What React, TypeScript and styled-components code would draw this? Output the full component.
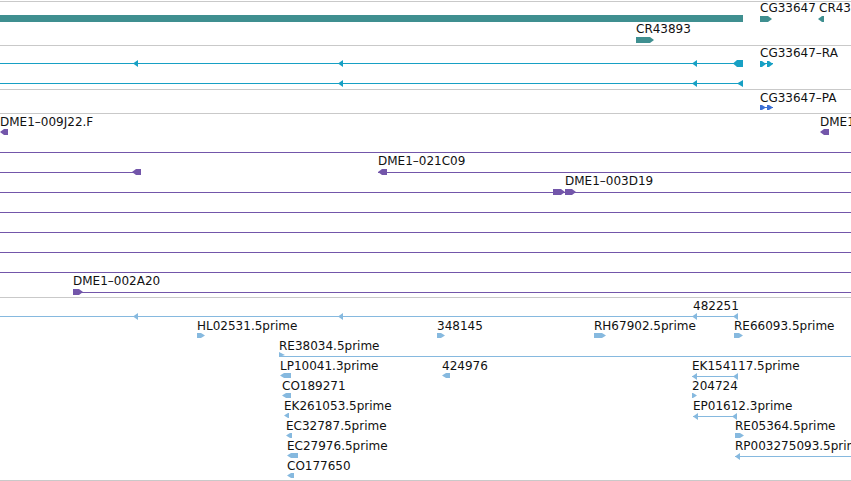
import React from 'react'
import styled, { createGlobalStyle } from 'styled-components'

const GlobalStyle = createGlobalStyle`
  html, body {
    margin: 0;
    padding: 0;
    background: #ffffff;
    overflow: hidden;
  }
  body {
    font-family: "DejaVu Sans", "Liberation Sans", sans-serif;
  }
`

const Browser = styled.div`
  width: 851px;
  height: 481px;
  padding-top: 1px;
  box-sizing: border-box;
  display: flex;
  flex-direction: column;
  overflow: hidden;
`

const TrackBox = styled.div<{ $h: number }>`
  position: relative;
  flex: none;
  height: ${p => p.$h}px;
  border-bottom: 1px solid #c9c9c9;
  overflow: hidden;
  &:first-child {
    border-top: 1px solid #c9c9c9;
  }
`

const Glyphs = styled.svg`
  position: absolute;
  left: 0;
  top: 0;
  display: block;
`

const Label = styled.span`
  position: absolute;
  font-family: "DejaVu Sans", "Liberation Sans", sans-serif;
  font-size: 12px;
  line-height: 14px;
  color: #111;
  white-space: nowrap;
`

// path helpers, page coordinates
const box = (x1: number, x2: number, y1: number, y2: number) =>
  `M${x1} ${y1}H${x2}V${y2}H${x1}Z`
const line = (x1: number, x2: number, y: number) => box(x1, x2, y, y + 1)
const pentR = (x1: number, x2: number, y1: number, y2: number) => {
  const t = Math.min(4, x2 - x1 - 1)
  const m = (y1 + y2) / 2
  return `M${x1} ${y1}H${x2 - t}L${x2} ${m}L${x2 - t} ${y2}H${x1}Z`
}
const pentL = (x1: number, x2: number, y1: number, y2: number) => {
  const t = Math.min(4, x2 - x1 - 1)
  const m = (y1 + y2) / 2
  return `M${x2} ${y1}H${x1 + t}L${x1} ${m}L${x1 + t} ${y2}H${x2}Z`
}
const headL = (x: number, row: number) => {
  const m = row + 0.5
  return `M${x} ${m}L${x + 5} ${m - 3.5}V${m + 3.5}Z`
}

type Tag = { text: string; x: number; cap: number }
type Track = { top: number; h: number; color: string; shapes: string[]; tags: Tag[] }

const tracks: Track[] = [
  {
    top: 2,
    h: 43,
    color: '#3f8f90',
    shapes: [
      box(0, 743, 15, 22),
      pentR(760, 772, 16, 22),
      pentL(818, 824, 16, 22),
      pentR(636, 654, 37, 43),
    ],
    tags: [
      { text: 'CG33647', x: 760, cap: 4 },
      { text: 'CR43893', x: 819, cap: 4 },
      { text: 'CR43893', x: 636, cap: 25 },
    ],
  },
  {
    top: 46,
    h: 43,
    color: '#17a0c4',
    shapes: [
      line(0, 740, 63),
      headL(133, 63),
      headL(338, 63),
      headL(692, 63),
      pentL(733, 743, 60, 67),
      line(0, 740, 83),
      headL(338, 83),
      headL(692, 83),
      `M737 83.5L743 80V87Z`,
      line(760, 773, 63),
      pentR(760, 766, 61, 67),
      pentR(767, 773, 61, 67),
    ],
    tags: [{ text: 'CG33647–RA', x: 760, cap: 49 }],
  },
  {
    top: 90,
    h: 23,
    color: '#3a6fd6',
    shapes: [
      line(760, 773, 107),
      pentR(760, 766, 105, 110),
      pentR(767, 773, 105, 110),
    ],
    tags: [{ text: 'CG33647–PA', x: 760, cap: 94 }],
  },
  {
    top: 114,
    h: 183,
    color: '#7356aa',
    shapes: [
      pentL(0, 8, 129, 135),
      pentL(820, 829, 129, 135),
      line(0, 851, 152),
      line(0, 137, 172),
      pentL(132, 141, 169, 175),
      line(378, 851, 172),
      pentL(378, 387, 169, 175),
      line(0, 851, 192),
      pentR(553, 565, 189, 195),
      pentR(565, 576, 189, 195),
      line(0, 851, 212),
      line(0, 851, 232),
      line(0, 851, 252),
      line(0, 851, 272),
      line(73, 851, 292),
      pentR(73, 83, 289, 295),
    ],
    tags: [
      { text: 'DME1–009J22.F', x: 0, cap: 118 },
      { text: 'DME1', x: 820, cap: 118 },
      { text: 'DME1–021C09', x: 378, cap: 157 },
      { text: 'DME1–003D19', x: 565, cap: 177 },
      { text: 'DME1–002A20', x: 73, cap: 277 },
    ],
  },
  {
    top: 298,
    h: 182,
    color: '#86b9df',
    shapes: [
      line(0, 738, 316),
      headL(133, 316),
      headL(338, 316),
      headL(692, 316),
      headL(733, 316),
      pentR(197, 205, 333, 338),
      pentR(437, 445, 333, 338),
      pentR(594, 606, 333, 338),
      pentR(734, 743, 333, 338),
      line(279, 851, 356),
      `M279 352L285 355L279 357Z`,
      pentL(280, 291, 373, 378),
      pentL(442, 450, 373, 378),
      line(692, 738, 376),
      headL(692, 376),
      headL(733, 376),
      pentL(282, 291, 393, 398),
      pentR(692, 697, 393, 398),
      pentL(284, 289, 413, 418),
      line(693, 737, 416),
      headL(693, 416),
      headL(732, 416),
      pentL(286, 292, 433, 438),
      pentR(735, 744, 433, 438),
      pentL(287, 298, 453, 458),
      line(735, 851, 456),
      headL(735, 456),
      pentL(287, 294, 473, 478),
    ],
    tags: [
      { text: '482251', x: 693, cap: 302 },
      { text: 'HL02531.5prime', x: 197, cap: 322 },
      { text: '348145', x: 437, cap: 322 },
      { text: 'RH67902.5prime', x: 594, cap: 322 },
      { text: 'RE66093.5prime', x: 734, cap: 322 },
      { text: 'RE38034.5prime', x: 279, cap: 342 },
      { text: 'LP10041.3prime', x: 280, cap: 362 },
      { text: '424976', x: 442, cap: 362 },
      { text: 'EK154117.5prime', x: 692, cap: 362 },
      { text: 'CO189271', x: 282, cap: 382 },
      { text: '204724', x: 692, cap: 382 },
      { text: 'EK261053.5prime', x: 284, cap: 402 },
      { text: 'EP01612.3prime', x: 693, cap: 402 },
      { text: 'EC32787.5prime', x: 286, cap: 422 },
      { text: 'RE05364.5prime', x: 735, cap: 422 },
      { text: 'EC27976.5prime', x: 287, cap: 442 },
      { text: 'RP003275093.5prime', x: 735, cap: 442 },
      { text: 'CO177650', x: 287, cap: 462 },
    ],
  },
]

const TrackView = ({ track }: { track: Track }) => (
  <TrackBox $h={track.h}>
    <Glyphs width={851} height={track.h} viewBox={`0 ${track.top} 851 ${track.h}`}>
      {track.shapes.map((d, i) => (
        <path key={i} d={d} fill={track.color} />
      ))}
    </Glyphs>
    {track.tags.map(t => (
      <Label key={t.text + t.x} style={{ left: t.x, top: t.cap - track.top - 3 }}>
        {t.text}
      </Label>
    ))}
  </TrackBox>
)

const App = () => (
  <>
    <GlobalStyle />
    <Browser>
      {tracks.map(t => (
        <TrackView key={t.top} track={t} />
      ))}
    </Browser>
  </>
)

export default App
